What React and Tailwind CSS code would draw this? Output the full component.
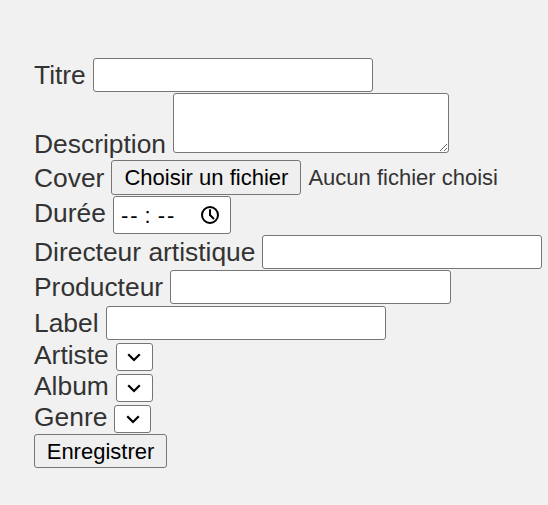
import React from "react";

const Label = ({ children, className = "" }) => (
  <span className={`leading-[30px] whitespace-nowrap ${className}`}>{children}</span>
);

const TextInput = ({ width = "w-[280px]" }) => (
  <input
    type="text"
    className={`${width} h-[34px] bg-white border border-[#767676] rounded-[3px] px-[3px] text-[22px] text-black outline-none`}
  />
);

const Chevron = () => (
  <svg width="14" height="9" viewBox="0 0 14 9" fill="none">
    <path d="M2 2l5 5 5-5" stroke="#000" strokeWidth="2.2" strokeLinecap="square" />
  </svg>
);

const Select = () => (
  <div className="mt-[3px] w-[37px] h-[28px] bg-white border border-[#767676] rounded-[3px] flex items-center justify-center">
    <Chevron />
  </div>
);

const Clock = () => (
  <svg width="20" height="20" viewBox="0 0 20 20" fill="none">
    <circle cx="10" cy="10" r="8" stroke="#000" strokeWidth="2" />
    <path d="M10 5v5l3.5 3.5" stroke="#000" strokeWidth="2" strokeLinecap="round" />
  </svg>
);

export default function App() {
  return (
    <div className="min-h-screen bg-[#f1f1f1] pl-[34px] pt-[58px] text-[#333] text-[26.4px] font-['Liberation_Sans',Arial,sans-serif]">
      <form>
        {/* Titre */}
        <div className="flex items-center gap-[7px] h-[34px]">
          <Label>Titre</Label>
          <TextInput />
        </div>

        {/* Description */}
        <div className="flex items-end gap-[7px] h-[67px]">
          <Label>Description</Label>
          <textarea className="mb-[6px] w-[276px] h-[60px] bg-white border border-[#767676] rounded-[3px] outline-none" />
        </div>

        {/* Cover */}
        <div className="flex items-center gap-[7px] h-[36px] pt-px">
          <Label>Cover</Label>
          <button
            type="button"
            className="w-[190px] h-[35px] bg-[#efefef] border border-[#767676] rounded-[3px] text-[22px] text-black"
          >
            Choisir un fichier
          </button>
          <span className="text-[22px]">Aucun fichier choisi</span>
        </div>

        {/* Durée */}
        <div className="flex items-center gap-[7px] h-[39px] pt-px">
          <Label className="-mt-[4px]">Durée</Label>
          <div className="w-[118px] h-[38px] bg-white border border-[#767676] rounded-[3px] flex items-center text-[22px] text-black">
            <span className="pl-[7px] flex gap-[2px]">
              <span>-</span>
              <span>-</span>
            </span>
            <span className="mx-[7px]">:</span>
            <span className="flex gap-[2px]">
              <span>-</span>
              <span>-</span>
            </span>
            <span className="ml-auto mr-[10px] flex">
              <Clock />
            </span>
          </div>
        </div>

        {/* Directeur artistique */}
        <div className="flex items-center gap-[7px] h-[35px] pt-px">
          <Label>Directeur artistique</Label>
          <TextInput />
        </div>

        {/* Producteur */}
        <div className="flex items-center gap-[7px] h-[35px] pt-px">
          <Label>Producteur</Label>
          <TextInput width="w-[281px]" />
        </div>

        {/* Label */}
        <div className="flex items-center gap-[7px] h-[36px] pt-px">
          <Label>Label</Label>
          <TextInput />
        </div>

        {/* Selects */}
        <div className="flex items-start gap-[7px] h-[31px]">
          <Label>Artiste</Label>
          <Select />
        </div>
        <div className="flex items-start gap-[7px] h-[31px]">
          <Label>Album</Label>
          <Select />
        </div>
        <div className="flex items-start gap-[7px] h-[31px]">
          <Label>Genre</Label>
          <Select />
        </div>

        <div className="flex pt-px">
          <button
            type="button"
            className="w-[133px] h-[34px] bg-[#efefef] border border-[#767676] rounded-[3px] text-[22px] text-black"
          >
            Enregistrer
          </button>
        </div>
      </form>
    </div>
  );
}
